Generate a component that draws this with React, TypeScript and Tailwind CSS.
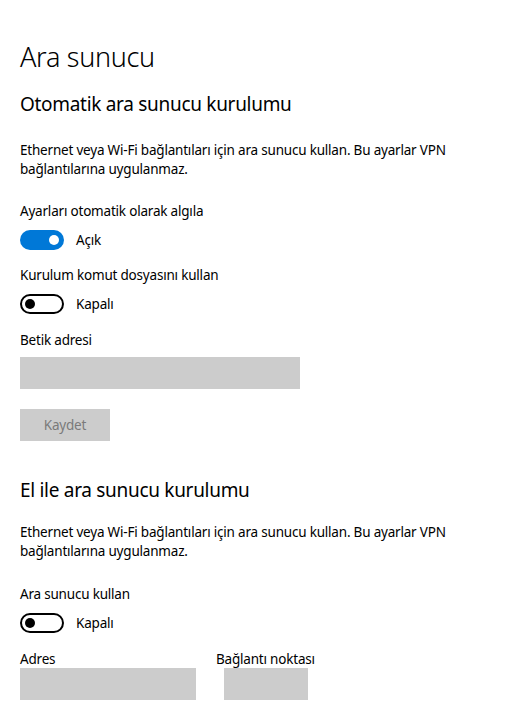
import { useState } from 'react';

function Toggle({ on, onChange }: { on: boolean; onChange: () => void }) {
  return (
    <button
      onClick={onChange}
      className="flex items-center gap-3"
    >
      <span
        className={`flex h-5 w-11 items-center rounded-full ${
          on ? 'bg-[#0078d7] justify-end pr-[5px]' : 'border-2 border-black justify-start pl-[3px]'
        }`}
      >
        <span className={`h-[10px] w-[10px] rounded-full ${on ? 'bg-white' : 'bg-black'}`} />
      </span>
      <span className="text-[13.5px] leading-5 tracking-[-0.2px]">{on ? 'Açık' : 'Kapalı'}</span>
    </button>
  );
}

export default function App() {
  const [autoDetect, setAutoDetect] = useState(true);
  const [useScript, setUseScript] = useState(false);
  const [useProxy, setUseProxy] = useState(false);

  return (
    <div
      className="min-h-[706px] w-[517px] bg-white pl-5 pt-[37px] text-black"
      style={{ fontFamily: '"Noto Sans", "Open Sans", sans-serif' }}
    >
      <h1 className="text-[27px] font-light leading-10 tracking-[-0.3px]">Ara sunucu</h1>

      {/* Otomatik */}
      <h2 className="mt-[13px] text-[19px] leading-7 tracking-[-0.3px]">Otomatik ara sunucu kurulumu</h2>
      <p className="mt-[23px] w-[460px] text-[13.5px] leading-[19px] tracking-[-0.2px]">
        Ethernet veya Wi-Fi bağlantıları için ara sunucu kullan. Bu ayarlar VPN bağlantılarına uygulanmaz.
      </p>

      <div className="mt-[22px] text-[13.5px] leading-5 tracking-[-0.2px]">Ayarları otomatik olarak algıla</div>
      <div className="mt-[9px]">
        <Toggle on={autoDetect} onChange={() => setAutoDetect(v => !v)} />
      </div>

      <div className="mt-[15px] text-[13.5px] leading-5 tracking-[-0.2px]">Kurulum komut dosyasını kullan</div>
      <div className="mt-[9px]">
        <Toggle on={useScript} onChange={() => setUseScript(v => !v)} />
      </div>

      <div className="mt-[16px] text-[13.5px] leading-5 tracking-[-0.2px]">Betik adresi</div>
      <div className="mt-[7px] h-8 w-[280px] bg-[#cccccc]" />
      <button className="mt-5 flex h-8 w-[90px] items-center justify-center bg-[#cccccc] text-[13.5px] tracking-[-0.2px] text-[#7a7a7a]">
        Kaydet
      </button>

      {/* El ile */}
      <h2 className="mt-[35px] text-[19px] leading-7 tracking-[-0.3px]">El ile ara sunucu kurulumu</h2>
      <p className="mt-[19px] w-[460px] text-[13.5px] leading-[19px] tracking-[-0.2px]">
        Ethernet veya Wi-Fi bağlantıları için ara sunucu kullan. Bu ayarlar VPN bağlantılarına uygulanmaz.
      </p>

      <div className="mt-[23px] text-[13.5px] leading-5 tracking-[-0.2px]">Ara sunucu kullan</div>
      <div className="mt-[9px]">
        <Toggle on={useProxy} onChange={() => setUseProxy(v => !v)} />
      </div>

      <div className="mt-[17px] flex text-[13.5px] tracking-[-0.2px]">
        <div className="w-[196px]">
          <div className="leading-[18px]">Adres</div>
          <div className="h-8 w-[176px] bg-[#cccccc]" />
        </div>
        <div>
          <div className="leading-[18px]">Bağlantı noktası</div>
          <div className="ml-2 h-8 w-[84px] bg-[#cccccc]" />
        </div>
      </div>
    </div>
  );
}
